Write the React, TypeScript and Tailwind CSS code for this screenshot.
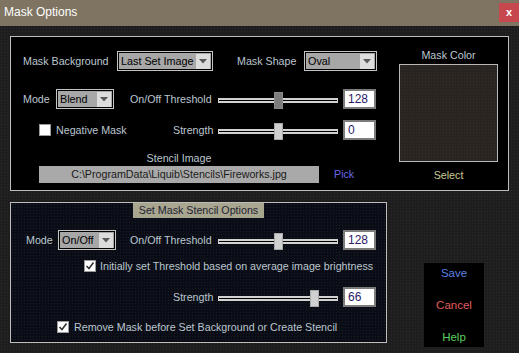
import React from 'react';

// Windows-style "Mask Options" dialog

const Dropdown: React.FC<{ text: string; width: string }> = ({ text, width }) => (
  <div className={`${width} h-[20px] border border-[#c4c4c4] flex`}>
    <div className="flex-1 border border-black bg-[#a7a7a7] flex items-center justify-between pl-[2px] pr-[1px]">
      <span className="text-black text-[10.8px] leading-none whitespace-nowrap">{text}</span>
      <div className="w-[14px] h-[15px] shrink-0 bg-[#dcdcdc] flex items-center justify-center">
        <svg width="8" height="5" viewBox="0 0 8 5">
          <polygon points="0,0 8,0 4,4.5" fill="#5a5a5a" />
        </svg>
      </div>
    </div>
  </div>
);

const Slider: React.FC<{ value: number; min: number; max: number; focused?: boolean }> = ({
  value,
  min,
  max,
  focused,
}) => {
  const left = Math.round(((value - min) / (max - min)) * 111);
  return (
    <div className="relative w-[120px] h-[20px]">
      <div className="mt-[9px] h-[5px] border-t-2 border-b-2 border-x border-[#d2d2d2] bg-black" />
      <div
        className={
          focused
            ? 'absolute top-[3px] w-[9px] h-[17px] border border-[#8a8a8a] bg-[#a0a0a0] bg-[radial-gradient(#7a7a7a_0.7px,transparent_0.8px)] bg-[length:2px_2px]'
            : 'absolute top-[3px] w-[9px] h-[17px] border border-[#a8a8a8] bg-[#d0d0d0]'
        }
        style={{ left }}
      />
    </div>
  );
};

const NumBox: React.FC<{ value: string }> = ({ value }) => (
  <div className="w-[33px] h-[20px] ml-[5px] bg-white border-2 border-[#7c7c7c] flex items-center pl-[3px]">
    <span className="text-[#2a1a6a] text-[12px] leading-none">{value}</span>
  </div>
);

const Check: React.FC<{ checked?: boolean }> = ({ checked }) => (
  <div className="w-[12px] h-[12px] shrink-0 bg-white border border-[#9a9a9a] flex items-center justify-center">
    {checked && (
      <svg width="10" height="10" viewBox="0 0 10 10">
        <polyline points="1.5,5 4,7.5 8.5,1.5" fill="none" stroke="#333" strokeWidth="1.6" />
      </svg>
    )}
  </div>
);

const App: React.FC = () => {
  return (
    <div className="w-[519px] h-[353px] overflow-hidden bg-[#1e1e1e] bg-[radial-gradient(#2a2a2a_0.7px,transparent_0.8px)] bg-[length:3px_3px] font-['Liberation_Sans',Arial,sans-serif] text-[10.7px] text-[#bcc6d0]">
      {/* title bar */}
      <div className="h-[26px] bg-[#7e7461] flex justify-between">
        <span className="pl-[4px] pt-[5px] text-white text-[12px] leading-[14px]">Mask Options</span>
        <div className="mt-[3px] w-[20px] h-[19px] bg-[#c6474e] text-white font-bold text-[11px] flex items-center justify-center">
          x
        </div>
      </div>

      <div className="pt-[10px] pl-[10px]">
        {/* top panel */}
        <div className="w-[499px] h-[155px] border border-[#bdbdbd] bg-black flex">
          <div className="w-[388px]">
            <div className="mt-[14px] h-[20px] flex items-center pl-[12px]">
              <span className="w-[94px]">Mask Background</span>
              <Dropdown text="Last Set Image" width="w-[96px]" />
              <span className="ml-[24px] w-[67px]">Mask Shape</span>
              <Dropdown text="Oval" width="w-[73px]" />
            </div>
            <div className="mt-[18px] h-[20px] flex items-center pl-[12px]">
              <span className="w-[33px]">Mode</span>
              <Dropdown text="Blend" width="w-[58px]" />
              <span className="ml-[16px] w-[88px]">On/Off Threshold</span>
              <Slider value={128} min={0} max={255} focused />
              <NumBox value="128" />
            </div>
            <div className="mt-[11px] h-[20px] flex items-center pl-[28px]">
              <Check />
              <span className="ml-[5px] w-[117px]">Negative Mask</span>
              <span className="w-[45px]">Strength</span>
              <Slider value={0} min={-100} max={100} />
              <NumBox value="0" />
            </div>
            <div className="mt-[11px] ml-[28px] w-[280px] h-[14px] leading-[14px] text-center">Stencil Image</div>
            <div className="mt-[1px] ml-[28px] flex items-center">
              <div className="w-[280px] h-[17px] bg-[#a9a9a9] text-[#1a1a1a] flex items-center justify-center">
                C:\ProgramData\Liquib\Stencils\Fireworks.jpg
              </div>
              <span className="ml-[15px] text-[#6a68e6]">Pick</span>
            </div>
          </div>
          <div className="w-[99px] pt-[11px] flex flex-col items-center">
            <span className="h-[14px] leading-[14px]">Mask Color</span>
            <div className="mt-[2px] w-[99px] h-[98px] border border-[#b8b8b8] bg-[#29241f] bg-[radial-gradient(#352f29_0.7px,transparent_0.8px)] bg-[length:3px_3px]" />
            <span className="mt-[6px] h-[14px] leading-[14px] text-[#c9c995]">Select</span>
          </div>
        </div>

        <div className="mt-[11px] flex items-start">
          {/* bottom panel */}
          <div className="w-[377px] h-[141px] border border-[#bdbdbd] bg-[#0a0d15] bg-[radial-gradient(#181d28_0.7px,transparent_0.8px)] bg-[length:3px_3px]">
            <div className="mx-auto w-[131px] h-[15px] bg-[#a9a690] text-[#1c2330] flex items-center justify-center">
              Set Mask Stencil Options
            </div>
            <div className="mt-[12px] h-[20px] flex items-center pl-[15px]">
              <span className="w-[32px]">Mode</span>
              <Dropdown text="On/Off" width="w-[58px]" />
              <span className="ml-[14px] w-[88px]">On/Off Threshold</span>
              <Slider value={128} min={0} max={255} />
              <NumBox value="128" />
            </div>
            <div className="mt-[10px] h-[12px] flex items-center pl-[73px]">
              <Check checked />
              <span className="ml-[4px] whitespace-nowrap">Initially set Threshold based on average image brightness</span>
            </div>
            <div className="mt-[15px] h-[20px] flex items-center pl-[162px]">
              <span className="w-[45px]">Strength</span>
              <Slider value={66} min={-100} max={100} />
              <NumBox value="66" />
            </div>
            <div className="mt-[14px] h-[12px] flex items-center pl-[46px]">
              <Check checked />
              <span className="ml-[5px] whitespace-nowrap">Remove Mask before Set Background or Create Stencil</span>
            </div>
          </div>

          {/* buttons */}
          <div className="ml-[37px] mt-[61px] w-[60px] h-[84px] bg-black flex flex-col items-center pt-[3px] gap-[18px] text-[11.5px] leading-[14px]">
            <span className="text-[#5b82e6]">Save</span>
            <span className="text-[#e05c5c]">Cancel</span>
            <span className="text-[#5ccf5c]">Help</span>
          </div>
        </div>
      </div>
    </div>
  );
};

export default App;
